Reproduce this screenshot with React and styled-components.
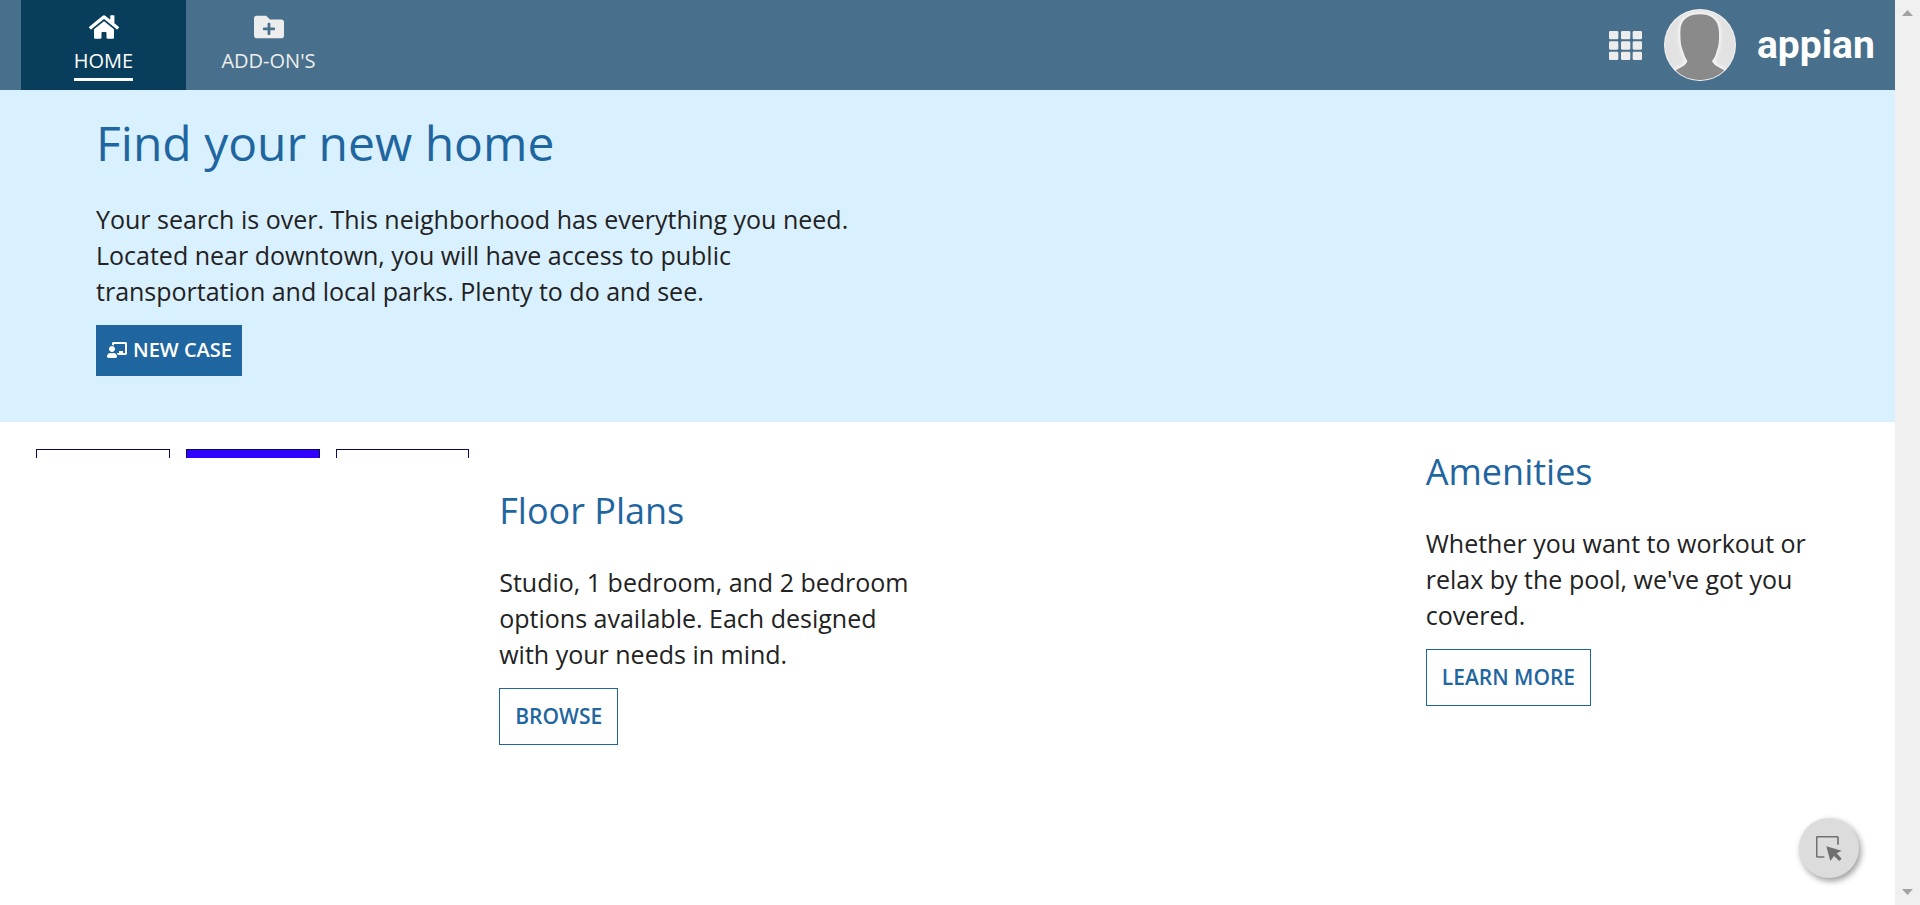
import React from "react";
import styled, { createGlobalStyle } from "styled-components";
import { FaHome, FaFolderPlus, FaChalkboardTeacher } from "react-icons/fa";

const GlobalStyle = createGlobalStyle`
  *, *::before, *::after { box-sizing: border-box; }
  body { margin: 0; background: #fff; color: #222; font-family: "Open Sans", "Noto Sans", sans-serif; font-size: 25px; line-height: 36px; }
  h1, h2, p { margin: 0; }
`;

const Shell = styled.div`
  display: flex;
  min-height: 100vh;
`;

const Page = styled.div`
  flex: 1;
  min-width: 0;
  position: relative;
`;

const ScrollRail = styled.div`
  width: 25px;
  background: #f0f0f0;
  display: flex;
  flex-direction: column;
  justify-content: space-between;
  align-items: center;
  padding: 10px 0;
`;

const Arrow = styled.svg`
  display: block;
  width: 11px;
  height: 6px;
  fill: #a3a3a3;
`;

const Header = styled.header`
  display: flex;
  justify-content: space-between;
  height: 90px;
  background: #48708c;
  padding: 0 20px 0 21px;
`;

const Nav = styled.nav`
  display: flex;
`;

const Tab = styled.a`
  width: 165px;
  padding-top: 12px;
  display: flex;
  flex-direction: column;
  align-items: center;
  gap: 5px;
  text-decoration: none;
  font-size: 20px;
  line-height: 28px;
  color: ${(p) => (p.$active ? "#fff" : "#ededed")};
  background: ${(p) => (p.$active ? "#083d5b" : "transparent")};
`;

const TabLabel = styled.span`
  padding-bottom: 3px;
  border-bottom: 3px solid ${(p) => (p.$active ? "#fff" : "transparent")};
`;

const Tools = styled.div`
  display: flex;
  align-items: center;
  gap: 21px;
`;

const IconButton = styled.button`
  display: block;
  padding: 0;
  border: 0;
  background: none;
  line-height: 0;
  cursor: pointer;
`;

const Logo = styled.a`
  width: 118px;
  color: #fff;
  font-family: Roboto, "Open Sans", sans-serif;
  font-size: 39px;
  line-height: 44px;
  font-weight: 700;
  text-decoration: none;
`;

const Hero = styled.section`
  background: #d9f0ff;
  padding: 17px 96px 46px;
`;

const HeroTitle = styled.h1`
  color: #1f66a0;
  font-size: 48px;
  line-height: 72px;
  font-weight: 400;
  margin-bottom: 22px;
`;

const Copy = styled.p`
  max-width: 800px;
  padding-right: 8px;
  margin-bottom: 16px;
`;

const Button = styled.button`
  display: inline-flex;
  align-items: center;
  gap: 6px;
  font-family: inherit;
  font-size: ${(p) => (p.$primary ? 20 : 21)}px;
  font-weight: 600;
  line-height: 27px;
  cursor: pointer;
  border: 1px solid #1f66a0;
  color: ${(p) => (p.$primary ? "#fff" : "#1f66a0")};
  background: ${(p) => (p.$primary ? "#1f66a0" : "#fff")};
  padding: ${(p) => (p.$primary ? "10px 9px 12px 10px" : "14px 15px")};
`;

const Columns = styled.main`
  display: grid;
  grid-template-columns: repeat(4, 1fr);
  gap: 30px;
  padding: 23px 36px;
`;

const Column = styled.section`
  padding-top: ${(p) => p.$drop}px;
`;

const SectionTitle = styled.h2`
  color: #1f66a0;
  font-size: 36px;
  line-height: 54px;
  font-weight: 400;
  margin-bottom: 26px;
`;

const Units = styled.div`
  display: grid;
  grid-template-columns: repeat(3, 1fr);
  gap: 16px;
`;

const Unit = styled.div`
  height: 9px;
  border: 1px solid #08085c;
  border-bottom: 0;
  background: ${(p) => (p.$filled ? "#2f00ff" : "#fff")};
`;

const SelectButton = styled.button`
  position: fixed;
  right: 61px;
  bottom: 27px;
  width: 60px;
  height: 60px;
  display: flex;
  align-items: center;
  justify-content: center;
  padding: 0;
  border: 0;
  border-radius: 50%;
  background: #dcdcdc;
  box-shadow: 2px 3px 6px rgba(0, 0, 0, 0.4);
  cursor: pointer;
`;

function GridIcon() {
  return (
    <svg width="34" height="30" viewBox="0 -3 102 90" fill="#ededed">
      {[0, 31, 62].map((y) =>
        [0, 36, 71].map((x) => <rect key={`${x}-${y}`} x={x} y={y} width="28" height="25" rx="4" />)
      )}
    </svg>
  );
}

function Avatar() {
  return (
    <svg width="72" height="72" viewBox="0 0 216 216">
      <defs>
        <clipPath id="disc"><circle cx="108" cy="108" r="106" /></clipPath>
        <filter id="glow" x="-20%" y="-20%" width="140%" height="140%"><feGaussianBlur stdDeviation="7" /></filter>
        <path id="person" d="M108 16C70 16 49 34 49 68C49 96 51 112 57 126C61 140 66 150 70 156C66 170 50 175 35 184C52 203 78 213 108 213C138 213 164 203 181 184C166 175 150 170 144 156C150 150 155 140 158 126C164 112 166 96 165 68C163 34 144 16 108 16Z" />
      </defs>
      <circle cx="108" cy="108" r="108" fill="#f4f4f4" />
      <circle cx="108" cy="108" r="105" fill="#e2e2e2" />
      <g clipPath="url(#disc)">
        <use href="#person" fill="#fff" stroke="#fff" strokeWidth="6" filter="url(#glow)" />
        <use href="#person" fill="#8a8a8a" />
      </g>
    </svg>
  );
}

function SelectIcon() {
  return (
    <svg width="26" height="25" viewBox="0 0 78 75" fill="none">
      <path d="M66 26V6Q66 2 62 2H6Q2 2 2 6V59Q2 63 6 63H25" stroke="#707070" strokeWidth="5" />
      <path d="M31 31L77 44L62 52L77 68L70 75L54 60L43 75Z" fill="#707070" />
    </svg>
  );
}

export default function App() {
  return (
    <>
      <GlobalStyle />
      <Shell>
        <Page>
          <Header>
            <Nav>
              <Tab href="#home" $active>
                <FaHome size={30} />
                <TabLabel $active>HOME</TabLabel>
              </Tab>
              <Tab href="#addons">
                <FaFolderPlus size={30} />
                <TabLabel>ADD-ON'S</TabLabel>
              </Tab>
            </Nav>
            <Tools>
              <IconButton aria-label="Apps"><GridIcon /></IconButton>
              <IconButton aria-label="Profile"><Avatar /></IconButton>
              <Logo href="#appian">appian</Logo>
            </Tools>
          </Header>
          <Hero>
            <HeroTitle>Find your new home</HeroTitle>
            <Copy>
              Your search is over. This neighborhood has everything you need. Located near downtown,
              you will have access to public transportation and local parks. Plenty to do and see.
            </Copy>
            <Button $primary><FaChalkboardTeacher size={20} />NEW CASE</Button>
          </Hero>
          <Columns>
            <Column $drop={4}>
              <Units>
                <Unit />
                <Unit $filled />
                <Unit />
              </Units>
            </Column>
            <Column $drop={39}>
              <SectionTitle>Floor Plans</SectionTitle>
              <Copy>
                Studio, 1 bedroom, and 2 bedroom options available. Each designed with your needs in mind.
              </Copy>
              <Button>BROWSE</Button>
            </Column>
            <Column $drop={0} />
            <Column $drop={0}>
              <SectionTitle>Amenities</SectionTitle>
              <Copy>Whether you want to workout or relax by the pool, we've got you covered.</Copy>
              <Button>LEARN MORE</Button>
            </Column>
          </Columns>
        </Page>
        <ScrollRail aria-hidden="true">
          <Arrow viewBox="0 0 11 6"><path d="M0 6L5.500 0L11 6Z" /></Arrow>
          <Arrow viewBox="0 0 11 6"><path d="M0 0L5.500 6L11 0Z" /></Arrow>
        </ScrollRail>
      </Shell>
      <SelectButton aria-label="Select element"><SelectIcon /></SelectButton>
    </>
  );
}
